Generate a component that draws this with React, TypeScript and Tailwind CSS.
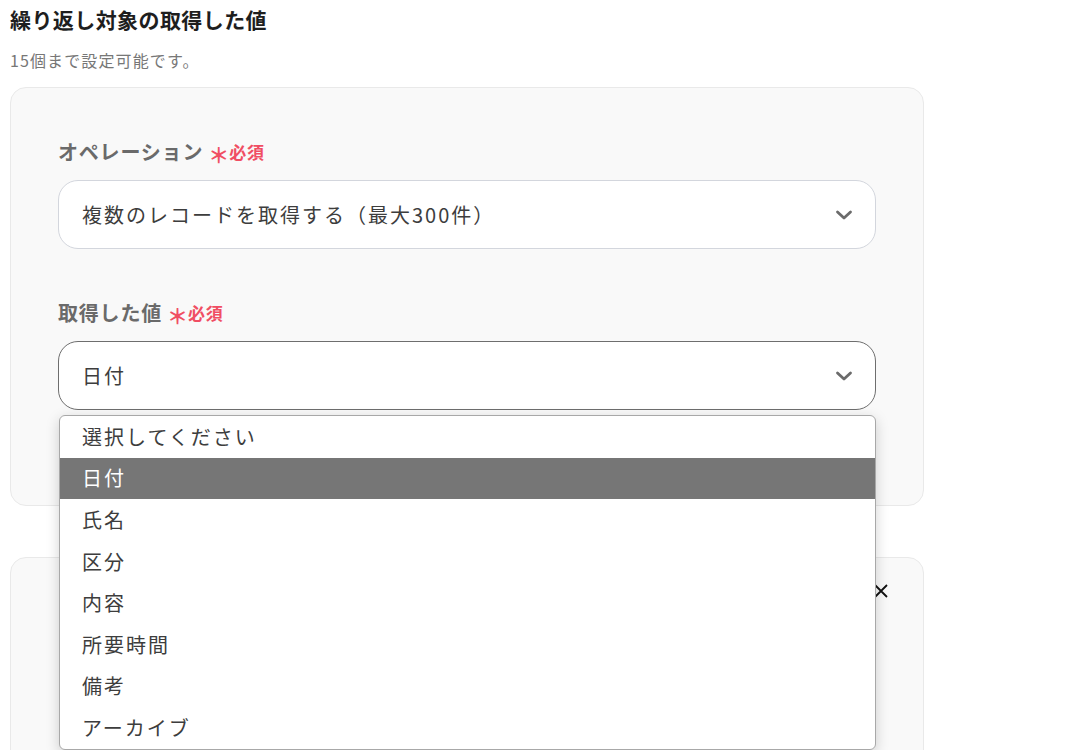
import React from "react";

/* =======================
   DATA
======================= */
const OPTIONS = [
  "選択してください",
  "日付",
  "氏名",
  "区分",
  "内容",
  "所要時間",
  "備考",
  "アーカイブ",
];

const SELECTED = "日付";

/* =======================
   PARTS
======================= */
const Chevron = () => (
  <svg width="18" height="12" viewBox="0 0 18 12" fill="none" className="shrink-0">
    <polyline
      points="2.5,3 9,9 15.5,3"
      stroke="#6b6b6b"
      strokeWidth="2.8"
      strokeLinecap="round"
      strokeLinejoin="round"
    />
  </svg>
);

const Label = ({ text }: { text: string }) => (
  <div className="flex items-center gap-[5px] h-[28px]">
    <span className="text-[20px] font-bold text-[#6a6a6a] tracking-[0.04em]">
      {text}
    </span>
    <span className="text-[21px] font-bold text-[#f04e63] leading-none mt-[4px]">
      ＊
    </span>
    <span className="text-[17px] font-bold text-[#f04e63] tracking-[0.04em] -ml-[5px]">
      必須
    </span>
  </div>
);

const SelectBox = ({
  value,
  focused,
}: {
  value: string;
  focused?: boolean;
}) => (
  <div
    className={
      "h-[69px] bg-white rounded-[20px] border flex items-center justify-between pl-[23px] pr-[22px] " +
      (focused ? "border-[#6e6e6e]" : "border-[#d3d6dd]")
    }
  >
    <span className="text-[20px] text-[#3d3d3d] tracking-[0.1em]">{value}</span>
    <Chevron />
  </div>
);

/* =======================
   COMPONENT
======================= */
export default function App() {
  return (
    <div
      className="min-h-screen bg-white px-[10px] pt-[5px]"
      style={{ fontFamily: '"Noto Sans CJK JP", "Noto Sans", sans-serif' }}
    >
      <h2 className="text-[21px] font-bold text-[#1e1e1e] tracking-[0.02em] leading-[28px]">
        繰り返し対象の取得した値
      </h2>
      <p className="mt-[17px] text-[16px] text-[#777] tracking-[0.07em] leading-[20px]">
        15個まで設定可能です。
      </p>

      {/* Card 1 */}
      <div className="mt-[17px] w-[914px] h-[419px] bg-[#f9f9f9] border border-[#e9e9e9] rounded-[16px] px-[47px] pt-[50px]">
        <Label text="オペレーション" />
        <div className="mt-[14px]">
          <SelectBox value="複数のレコードを取得する（最大300件）" />
        </div>

        <div className="mt-[50px]">
          <Label text="取得した値" />
        </div>
        <div className="mt-[14px] relative z-10">
          <SelectBox value={SELECTED} focused />

          {/* open list */}
          <div className="absolute left-[1px] right-0 top-[74px] bg-white border border-[#a8a8a8] rounded-[6px] shadow-[0_4px_14px_rgba(0,0,0,0.18)] overflow-hidden">
            {OPTIONS.map((opt) => (
              <div
                key={opt}
                className={
                  "h-[41.6px] flex items-center pl-[22px] text-[20px] tracking-[0.1em] " +
                  (opt === SELECTED
                    ? "bg-[#767676] text-white"
                    : "text-[#3d3d3d]")
                }
              >
                {opt}
              </div>
            ))}
          </div>
        </div>
      </div>

      {/* Card 2 */}
      <div className="mt-[51px] w-[914px] h-[260px] bg-[#f9f9f9] border border-[#e9e9e9] rounded-[16px] flex justify-end pr-[34px] pt-[25px]">
        <svg width="16" height="16" viewBox="0 0 16 16" fill="none">
          <path d="M2 2 L14 14 M14 2 L2 14" stroke="#111" strokeWidth="1.8" />
        </svg>
      </div>
    </div>
  );
}
